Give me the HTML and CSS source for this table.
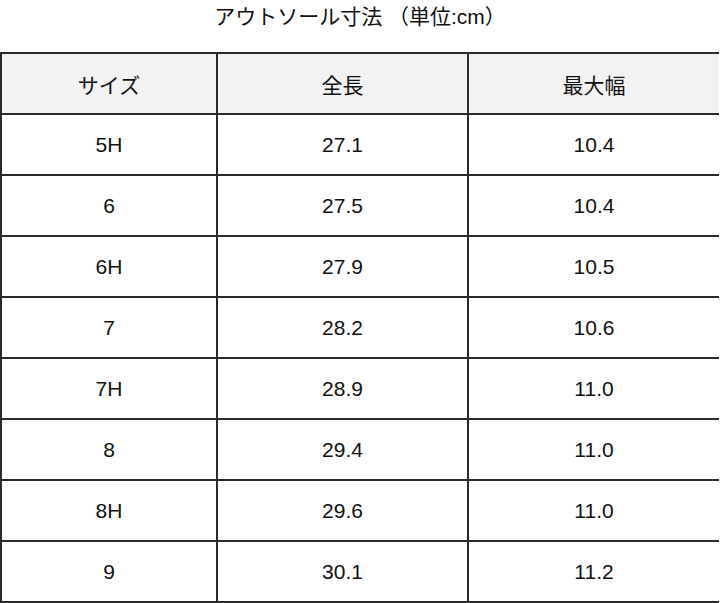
FILE: index.html
```html
<!DOCTYPE html>
<html lang="ja">
<head>
<meta charset="utf-8">
<link rel="stylesheet" href="styles.css">
</head>
<body>
<div class="page">
  <h1 class="title">アウトソール寸法 （単位:cm）</h1>
  <div class="grid">
    <div class="cell head">サイズ</div>
    <div class="cell head">全長</div>
    <div class="cell head">最大幅</div>
    <div class="cell">5H</div><div class="cell">27.1</div><div class="cell">10.4</div>
    <div class="cell">6</div><div class="cell">27.5</div><div class="cell">10.4</div>
    <div class="cell">6H</div><div class="cell">27.9</div><div class="cell">10.5</div>
    <div class="cell">7</div><div class="cell">28.2</div><div class="cell">10.6</div>
    <div class="cell">7H</div><div class="cell">28.9</div><div class="cell">11.0</div>
    <div class="cell">8</div><div class="cell">29.4</div><div class="cell">11.0</div>
    <div class="cell">8H</div><div class="cell">29.6</div><div class="cell">11.0</div>
    <div class="cell">9</div><div class="cell">30.1</div><div class="cell">11.2</div>
  </div>
</div>
</body>
</html>
```
FILE: styles.css
```css
html, body {
  margin: 0;
  padding: 0;
  background: #ffffff;
}
body {
  font-family: "Liberation Sans", Arial, "Noto Sans CJK JP", sans-serif;
  color: #111111;
}
.page {
  width: 720px;
}
.title {
  margin: 0;
  height: 52px;
  box-sizing: border-box;
  padding-top: 3px;
  font-size: 21px;
  font-weight: normal;
  line-height: 28px;
  text-align: center;
}
.grid {
  width: 719px;
  display: grid;
  grid-template-columns: 214px 249px 250px;
  grid-auto-rows: 59px;
  gap: 2px;
  padding: 2px;
  box-sizing: border-box;
  background: #2a2a2a;
}
.cell {
  background: #ffffff;
  display: flex;
  align-items: center;
  justify-content: center;
  font-size: 21px;
}
.head {
  background: #f2f2f2;
}
```
